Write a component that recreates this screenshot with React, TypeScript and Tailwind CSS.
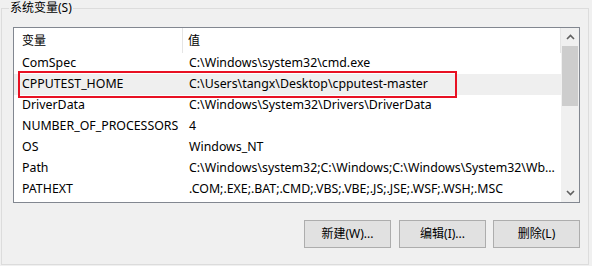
import React from "react";

const rows: [string, string][] = [
  ["ComSpec", "C:\\Windows\\system32\\cmd.exe"],
  ["CPPUTEST_HOME", "C:\\Users\\tangx\\Desktop\\cpputest-master"],
  ["DriverData", "C:\\Windows\\System32\\Drivers\\DriverData"],
  ["NUMBER_OF_PROCESSORS", "4"],
  ["OS", "Windows_NT"],
  ["Path", "C:\\Windows\\system32;C:\\Windows;C:\\Windows\\System32\\Wb..."],
  ["PATHEXT", ".COM;.EXE;.BAT;.CMD;.VBS;.VBE;.JS;.JSE;.WSF;.WSH;.MSC"],
];

export default function App() {
  return (
    <div
      className="relative w-[592px] h-[266px] bg-[#f0f0f0] text-[12px] text-black overflow-hidden"
      style={{ fontFamily: '"Noto Sans", "Noto Sans CJK SC", sans-serif' }}
    >
      <div className="relative ml-[1px] mt-[8px] w-[588px] h-[257px] border border-[#dcdcdc]">
        <div className="absolute left-[7px] top-[-9px] px-[1px] bg-[#f0f0f0] leading-[16px]">
          系统变量(S)
        </div>
        <div className="ml-[11px] mt-[18px] w-[567px] h-[176px] border border-[#828790] bg-white flex">
          <div className="w-[547px] flex flex-col">
            <div className="h-[25px] flex items-center">
              <div className="w-[169px] h-full pl-[8px] flex items-center border-r border-[#e5e5e5]">变量</div>
              <div className="flex-1 h-full pl-[5px] flex items-center border-r border-[#e5e5e5]">值</div>
            </div>
            {rows.map(([k, v], i) => (
              <div
                key={k}
                className={
                  "h-[21px] flex items-center whitespace-nowrap text-[12.35px] " +
                  (i === 1 ? "bg-[#efefef]" : "")
                }
              >
                <div className="w-[175px] pl-[8px]">{k}</div>
                <div className="flex-1">{v}</div>
              </div>
            ))}
          </div>
          <div className="w-[18px] bg-[#f0f0f0] flex flex-col items-center">
            <div className="h-[18px] w-full flex items-center justify-center">
              <svg width="9" height="6" viewBox="0 0 9 6">
                <path d="M1 5 L4.5 1.5 L8 5" fill="none" stroke="#606060" strokeWidth="1.6" />
              </svg>
            </div>
            <div className="w-[16px] h-[60px] bg-[#cdcdcd]" />
            <div className="flex-1" />
            <div className="h-[18px] w-full flex items-center justify-center">
              <svg width="9" height="6" viewBox="0 0 9 6">
                <path d="M1 1 L4.5 4.5 L8 1" fill="none" stroke="#606060" strokeWidth="1.6" />
              </svg>
            </div>
          </div>
        </div>
        <div className="flex justify-end mt-[17px] mr-[8px]">
          <button className="w-[87px] h-[28px] border border-[#adadad] bg-[#e1e1e1] text-[12px]">新建(W)...</button>
          <button className="w-[87px] h-[28px] ml-[8px] border border-[#adadad] bg-[#e1e1e1] text-[12px]">编辑(I)...</button>
          <button className="w-[87px] h-[28px] ml-[7px] border border-[#adadad] bg-[#e1e1e1] text-[12px]">删除(L)</button>
        </div>
      </div>
      <div className="absolute left-[18px] top-[71px] w-[439px] h-[27px] border-2 border-[#e81123]" />
    </div>
  );
}
